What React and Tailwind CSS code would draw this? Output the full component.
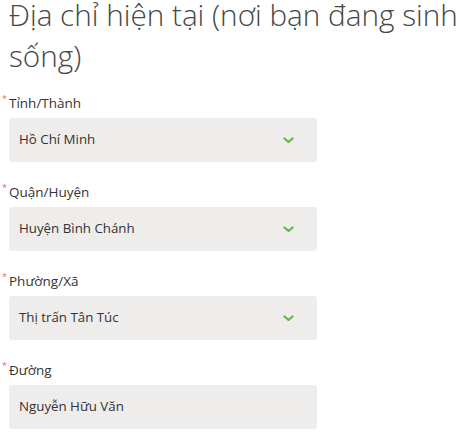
import React from 'react';

const fields = [
  { label: 'Tỉnh/Thành', value: 'Hồ Chí Minh', select: true },
  { label: 'Quận/Huyện', value: 'Huyện Bình Chánh', select: true },
  { label: 'Phường/Xã', value: 'Thị trấn Tân Túc', select: true },
  { label: 'Đường', value: 'Nguyễn Hữu Văn', select: false },
];

function Chevron() {
  return (
    <svg width="11" height="7" viewBox="0 0 11 7" fill="none">
      <path d="M1.5 1.5 L5.5 5 L9.5 1.5" stroke="#62b948" strokeWidth="2.3" strokeLinecap="round" strokeLinejoin="round" />
    </svg>
  );
}

export default function App() {
  return (
    <div className="min-h-screen bg-white pl-[2px] font-['Open_Sans',sans-serif] text-[#333]">
      <h1 className="ml-[7px] mt-[-6px] text-[29.7px] font-light leading-[41px] text-[#474747]">
        Địa chỉ hiện tại (nơi bạn đang sinh sống)
      </h1>
      <div className="mt-[17px] flex flex-col gap-[20px]">
        {fields.map((f) => (
          <div key={f.label} className="flex flex-col gap-[5px]">
            <div className="flex items-start h-[20px] text-[13.5px] leading-[20px]">
              <span className="w-[7px] text-[9px] leading-[12px] text-[#e66]">*</span>
              <span>{f.label}</span>
            </div>
            <div className="ml-[7px] flex h-[44px] w-[308px] items-center justify-between rounded-[3px] bg-[#eeedeb] pl-[10px] pr-[23px] text-[13.3px]">
              <span>{f.value}</span>
              {f.select && <Chevron />}
            </div>
          </div>
        ))}
      </div>
    </div>
  );
}
